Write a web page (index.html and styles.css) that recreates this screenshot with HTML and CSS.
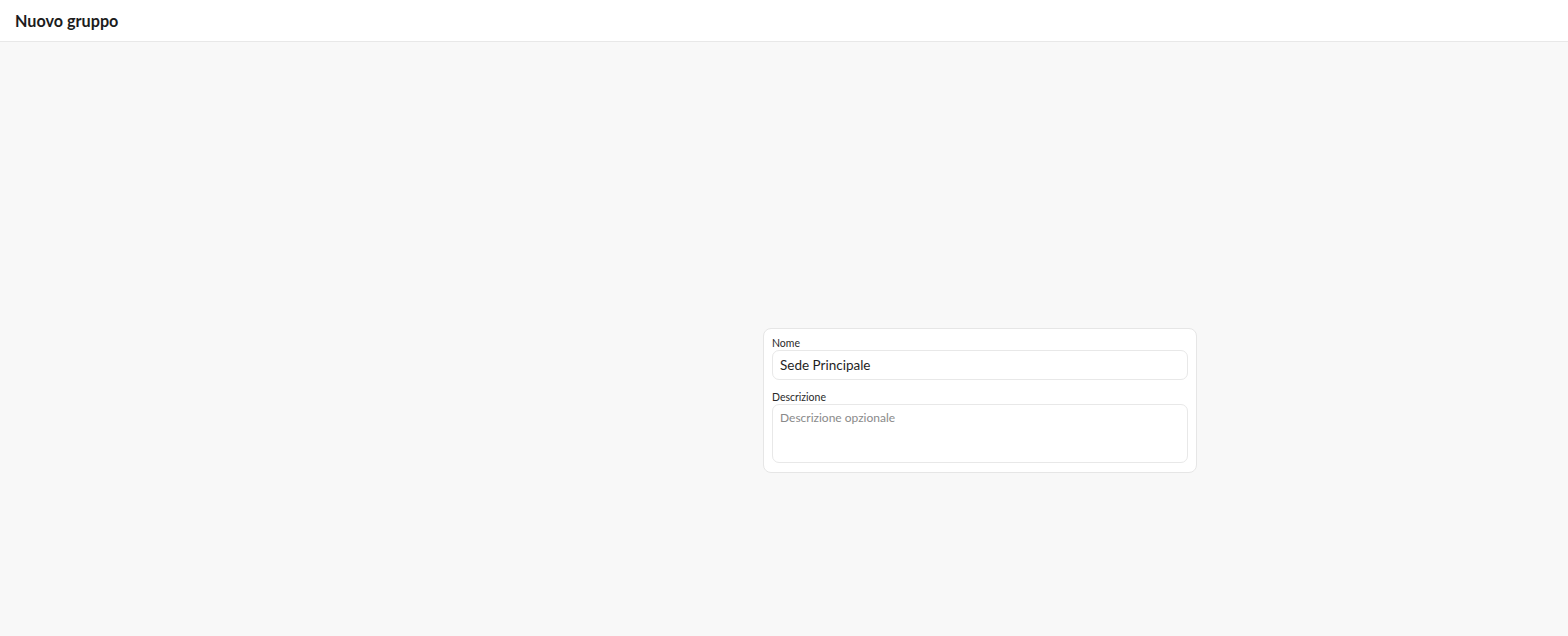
FILE: index.html
```html
<!DOCTYPE html>
<html lang="it">
<head>
  <meta charset="UTF-8" />
  <meta name="viewport" content="width=device-width, initial-scale=1.0">
  <title>Nuovo gruppo</title>
  <link rel="stylesheet" href="styles.css">
</head>
<body>
  <header class="top-bar">
    <h1 class="page-title">Nuovo gruppo</h1>
  </header>
  <main class="content">
    <form class="group-card">
      <div class="form-group">
        <label for="name">Nome</label>
        <input type="text" id="name" value="Sede Principale">
      </div>
      <div class="form-group">
        <label for="desc">Descrizione</label>
        <textarea id="desc" placeholder="Descrizione opzionale"></textarea>
      </div>
    </form>
  </main>
</body>
</html>
```

FILE: styles.css
```css
/* Reset */
* { margin: 0; padding: 0; box-sizing: border-box; }
html, body { height: 100%; }
body {
  font-family: 'Lato', 'Inter', sans-serif;
  background: #f8f8f8;
  color: #1f1f1f;
  display: flex;
  flex-direction: column;
}
/* Header */
.top-bar {
  height: 42px;
  background: #fff;
  border-bottom: 1px solid #e8e8e8;
  display: flex;
  align-items: center;
  padding: 0 15px;
}
.page-title {
  font-size: 16.2px;
  font-weight: 700;
  color: #1c1c1c;
}
/* Main */
.content {
  flex: 1;
  padding: 286px 0 0 763px;
}
.group-card {
  width: 434px;
  background: #fff;
  border: 1px solid #e6e6e6;
  border-radius: 8px;
  padding: 7px 8px 9px;
  display: flex;
  flex-direction: column;
  gap: 10px;
}
.form-group { display: flex; flex-direction: column; }
label {
  font-size: 10.5px;
  line-height: 14px;
  font-weight: 400;
  color: #2a2a2a;
}
input, textarea {
  width: 100%;
  border: 1px solid #e8e8e8;
  border-radius: 7px;
  background: #fff;
  font-family: inherit;
  font-size: 13.5px;
  color: #1f1f1f;
  padding: 0 7px;
  outline: none;
}
input { height: 30px; }
textarea {
  height: 59px;
  padding-top: 5px;
  resize: none;
  font-size: 12px;
}
textarea::placeholder { color: #8a8a8a; }
```
